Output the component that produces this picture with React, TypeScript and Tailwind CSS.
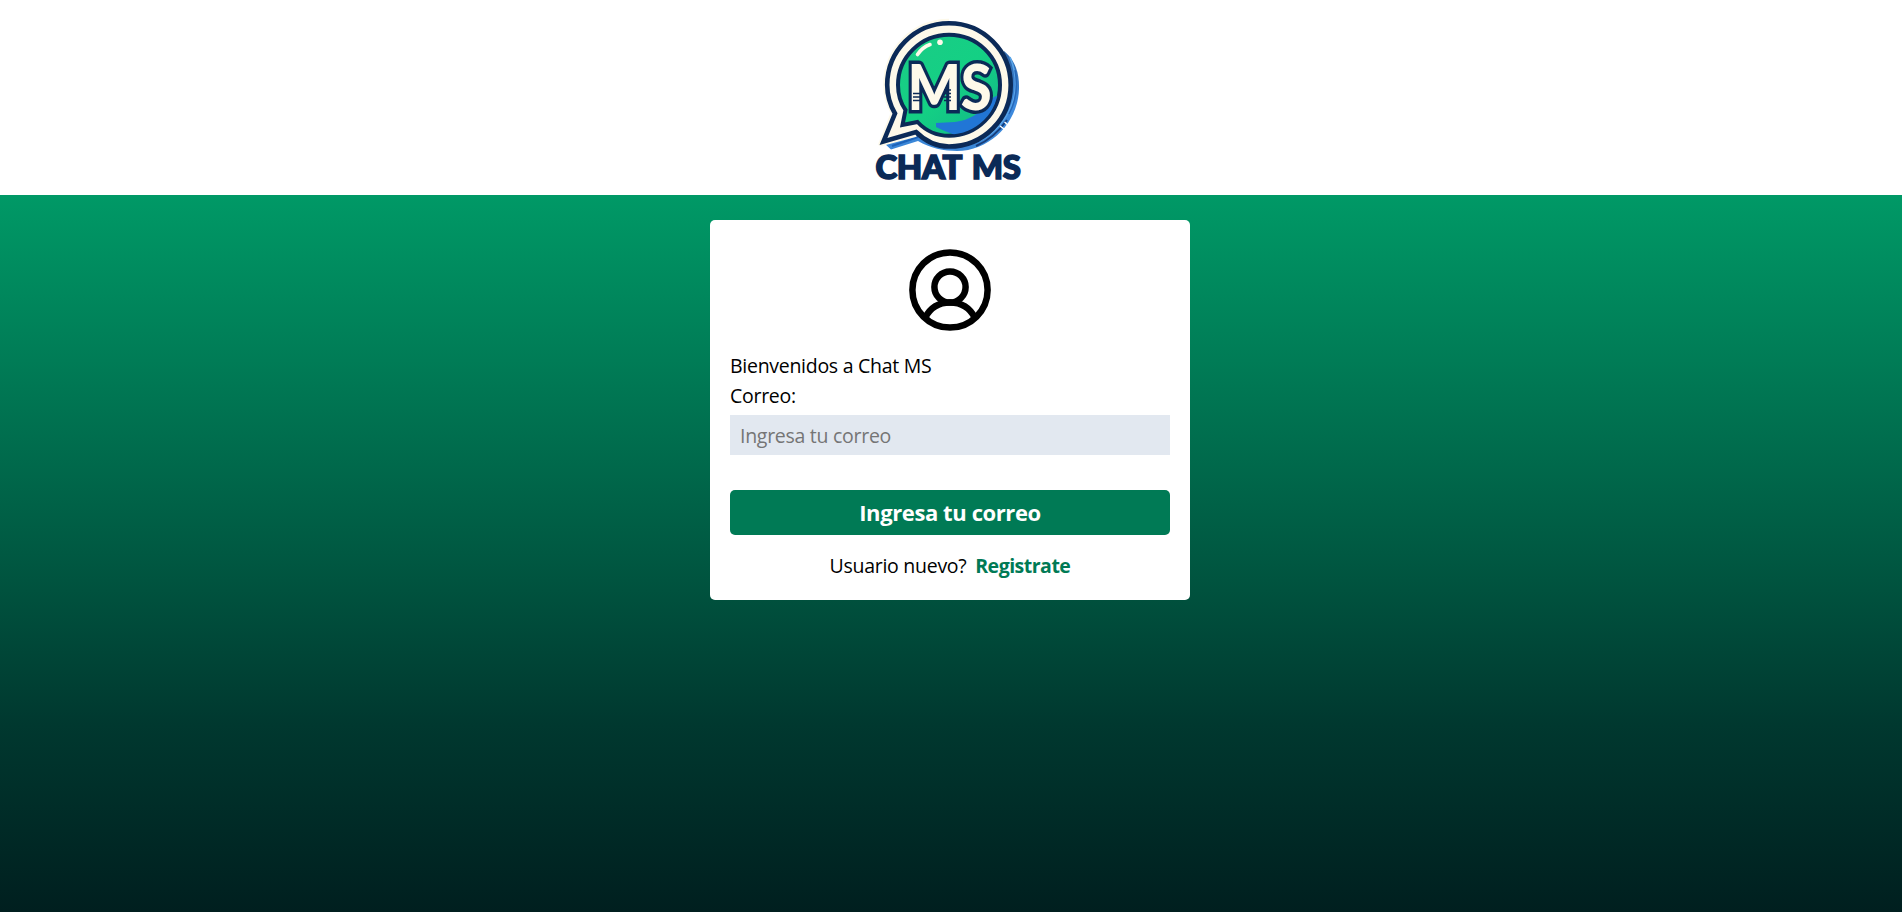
const NAVY = "#0b2a57";
const CREAM = "#fdf9ea";

function Logo() {
  return (
    <svg className="h-[195px] w-[182px]" viewBox="0 -10 182 195" role="img" aria-label="Chat MS">
      <defs>
        <linearGradient id="shade" x1="0" y1="0" x2="0" y2="1">
          <stop offset="0" stopColor="#2f66a8" />
          <stop offset="0.55" stopColor="#3d8ade" />
          <stop offset="1" stopColor="#3a86d6" />
        </linearGradient>
        <linearGradient id="fill" x1="0" y1="0" x2="1" y2="1">
          <stop offset="0" stopColor="#1bcb86" />
          <stop offset="0.5" stopColor="#14d084" />
          <stop offset="1" stopColor="#12b588" />
        </linearGradient>
        <clipPath id="disc">
          <circle cx="89" cy="75" r="49.500" />
        </clipPath>
      </defs>

      <path d="M144 41C155 50 159.500 63 159 79C158 112 131 140.500 97 141C84 141 70 138 58 131L31 139.500L24 133L58 106L100 100Z" fill="url(#shade)" />
      <path d="M150 47C158 66 157 86 149 101C142 115 130 127 116 132" fill="none" stroke="#5aa6ea" strokeWidth="1.600" />
      <path d="M155 60C158 76 156 91 149 104" fill="none" stroke="#2667b8" strokeWidth="1.500" />
      <path d="M147 110C140 120 130 130 116 136" fill="none" stroke="#173f7c" strokeWidth="2" />
      <path d="M140 116L144 119M144.500 112L148 115" stroke="white" strokeWidth="1.500" />
      <path d="M32 136L58 127" stroke="#1c62b8" strokeWidth="2" />

      <path
        d="M89 11C53.500 11 25.500 39.500 25.500 75C25.500 86 28.500 95 33 103L20.500 134L56 124.500"
        fill="none" stroke={CREAM} strokeWidth="4.500" strokeLinejoin="round"
      />
      <path
        d="M89 13.200C54.500 13.200 27.200 41 27.200 75C27.200 86 30 95 35 103.500L23.500 131.500L56 122C65.500 131.500 77.500 136.500 89 136.500C123.500 136.500 150.700 109 150.700 75C150.700 41 123.500 13.200 89 13.200Z"
        fill={CREAM} stroke={NAVY} strokeWidth="4.600" strokeLinejoin="miter"
      />
      <path
        d="M89 24.700C61 24.700 38 47 38 75C38 85 40.500 93 45.500 100L42.500 115L57.500 112C66 121 77 125.800 89 125.800C117 125.800 140 103 140 75C140 47 117 24.700 89 24.700Z"
        fill="url(#fill)" stroke={NAVY} strokeWidth="4"
      />
      <g clipPath="url(#disc)">
        <path d="M76 113L95 112C110 110 120 103 126 95C131 88 136 85 141 85L142 125H95C88 122 81 120 76 117Z" fill="#2176d6" />
      </g>
      <path d="M57.500 44.500C60.500 40 64.500 36.500 70 34.500" fill="none" stroke={CREAM} strokeWidth="3.600" strokeLinecap="round" />
      <circle cx="80" cy="32.300" r="2.800" fill={CREAM} />

      <text
        x="47.500" y="100" fontFamily="Lato, sans-serif" fontWeight="900" fontSize="63"
        fill={CREAM} stroke={NAVY} strokeWidth="7" strokeLinejoin="miter" paintOrder="stroke"
        textLength="84" lengthAdjust="spacingAndGlyphs"
      >
        MS
      </text>
      <path d="M53 83.500H60M53 87H60M53 90.500H60M84 80H91M84 83.500H91M84 87H91M84 90.500H91" stroke={NAVY} strokeWidth="1.300" />

      <text
        x="15.500" y="168.500" fontFamily="Lato, sans-serif" fontWeight="900" fontSize="31.500"
        fill={NAVY} stroke={NAVY} strokeWidth="1.600" wordSpacing="3" textLength="145" lengthAdjust="spacingAndGlyphs"
      >
        CHAT MS
      </text>
    </svg>
  );
}

function UserIcon() {
  return (
    <svg className="size-[100px]" viewBox="0 0 100 100" fill="none" stroke="black" strokeWidth="6.500" aria-hidden="true">
      <circle cx="50" cy="50" r="37.600" />
      <circle cx="50" cy="47" r="15.600" />
      <path d="M25 78C30 68 39 62.500 50 62.500C61 62.500 70 68 75 78" />
    </svg>
  );
}

export default function App() {
  return (
    <div className="flex h-[912px] flex-col font-['Open_Sans',sans-serif] text-[19.5px] leading-[30px] tracking-[-0.28px] text-black">
      <header className="flex h-[195px] shrink-0 justify-center bg-white">
        <Logo />
      </header>
      <main className="grow bg-[linear-gradient(to_bottom,#009966_0%,#007c56_23%,#005942_50%,#00382f_74%,#001f1f_100%)] pt-[25px] pr-[2px]">
        <section className="mx-auto flex h-[380px] w-[480px] flex-col rounded-[5px] bg-white p-5">
          <div className="mb-[11px] flex justify-center">
            <UserIcon />
          </div>
          <h3>Bienvenidos a Chat MS</h3>
          <form className="flex flex-col">
            <label htmlFor="email">Correo:</label>
            <input
              id="email"
              type="email"
              placeholder="Ingresa tu correo"
              className="mt-[4px] h-10 bg-[#e2e8f0] px-[10px] tracking-[-0.28px] outline-none placeholder:text-[#757575]"
            />
            <button
              type="button"
              className="mt-[35px] h-[45px] rounded-[5px] bg-[#007a55] pb-[2px] text-[22px] font-bold tracking-[-0.4px] text-white"
            >
              Ingresa tu correo
            </button>
          </form>
          <p className="mt-4 text-center">
            Usuario nuevo?{" "}
            <a href="#" className="ml-1 font-bold tracking-[-0.5px] text-[#007a55]">Registrate</a>
          </p>
        </section>
      </main>
    </div>
  );
}
